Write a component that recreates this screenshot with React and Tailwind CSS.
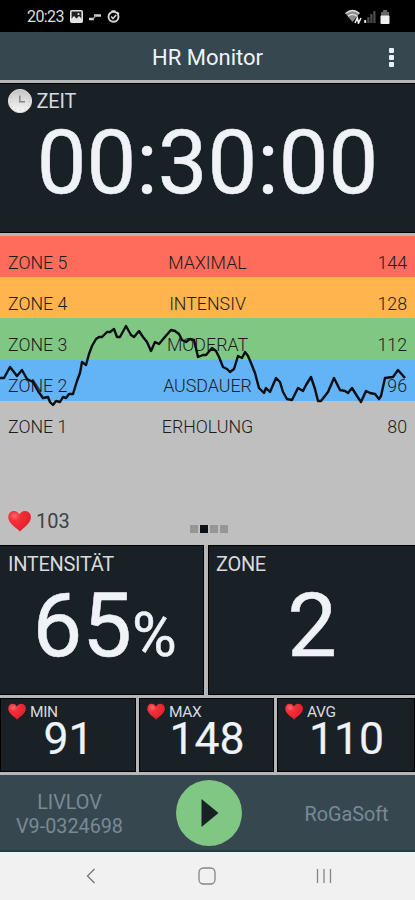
import React from "react";

const ZONES = [
  { name: "ZONE 5", label: "MAXIMAL", value: 144, bg: "bg-[#ff6c5c]" },
  { name: "ZONE 4", label: "INTENSIV", value: 128, bg: "bg-[#ffb44d]" },
  { name: "ZONE 3", label: "MODERAT", value: 112, bg: "bg-[#80c784]" },
  { name: "ZONE 2", label: "AUSDAUER", value: 96, bg: "bg-[#63b3f7]" },
  { name: "ZONE 1", label: "ERHOLUNG", value: 80, bg: "bg-[#bfbfbf]" },
];

// Heart-rate trace; the y axis starts at the top of the chart.
const TRACE =
  "0,142 4,142 10,131 17,140 22,134 27,143 33,146 38,155 43,162 48,161 50,166 53,169 56,165 60,166 63,161 66,162 69,158 73,158 77,145 80,137 82,126 86,129 89,118 92,110 96,103 99,101 102,101 107,96 110,96 114,93 117,101 120,101 126,90 131,99 134,101 139,95 143,101 147,106 151,115 155,106 159,108 164,102 171,94 175,95 179,98 182,104 186,106 190,103 194,104 198,121 203,119 206,119 212,112 216,115 219,121 223,131 227,133 230,136 234,133 238,120 242,122 245,116 248,120 251,127 255,137 259,152 264,157 266,152 270,156 276,142 280,146 283,156 287,163 292,164 298,152 303,155 306,149 311,141 315,153 318,165 321,165 328,156 334,142 340,154 345,155 348,157 352,152 357,160 361,166 366,155 370,157 375,158 379,163 381,160 385,142 393,141 398,134 405,142";

function Heart({ className }) {
  return (
    <svg viewBox="0 0 24 24" preserveAspectRatio="none" className={className}>
      <defs>
        <radialGradient id="heartFill" cx="28%" cy="25%" r="80%">
          <stop offset="0" stopColor="#ff6a6a" />
          <stop offset="0.3" stopColor="#f4303a" />
          <stop offset="1" stopColor="#e01f2a" />
        </radialGradient>
      </defs>
      <path
        fill="url(#heartFill)"
        d="M12.4 23.500C9.6 20 2.200 16.300.6 10.200-.6 5 2.200 1 6.200 1c2.700 0 4.700 1.700 5.600 4C13 2.400 15.300.800 18 1c4.200.300 6.800 4.300 5.600 9-1.500 5.800-8.400 10-11.200 13.500z"
      />
    </svg>
  );
}

function Clock() {
  return (
    <svg viewBox="0 0 26 26" className="size-[26px]">
      <defs>
        <linearGradient id="clockFace" x1="0" y1="0" x2="0" y2="1">
          <stop offset="0" stopColor="#c4c4c4" />
          <stop offset="1" stopColor="#f8f8f8" />
        </linearGradient>
      </defs>
      <circle cx="13" cy="13" r="11.600" fill="url(#clockFace)" stroke="#dcdcdc" strokeWidth="1" />
      <circle cx="13" cy="13" r="9.500" fill="none" stroke="#b4b4b4" strokeWidth="1" strokeDasharray="0.800 3.900" />
      <path d="M12.800 7.500v6.200h5.200" fill="none" stroke="#858585" strokeWidth="1.500" />
    </svg>
  );
}

function StatusBar() {
  return (
    <div className="flex h-8 items-center justify-between bg-black pt-[1px] pr-[25px] pl-[27px] text-[#dedede]">
      <div className="flex items-center">
        <span className="w-[38px] text-[16px] leading-[31px] tracking-[-0.6px]">20:23</span>
        <svg viewBox="0 0 13 13" className="ml-[5px] size-[13px]">
          <rect x="0.800" y="0.800" width="11.400" height="11.400" rx="1" fill="#222" stroke="#e2e2e2" strokeWidth="1.600" />
          <path d="M1 11V9l3-3 2.500 2.500L9 6l3 3v3H1z" fill="#e2e2e2" />
          <circle cx="8.500" cy="4" r="1.100" fill="#e2e2e2" />
        </svg>
        <svg viewBox="0 0 12 12" className="ml-[6px] size-3">
          <path d="M0 8h5M5 4.500h7" stroke="#d4d4d4" strokeWidth="2.400" />
          <path d="M4 8l3-3.500" stroke="#999" strokeWidth="1.200" />
        </svg>
        <svg viewBox="0 0 13 13" className="ml-[6px] size-[13px]">
          <circle cx="6.500" cy="6.800" r="5" fill="none" stroke="#d8d8d8" strokeWidth="1.900" />
          <path d="M4.200 6.600l1.800 2 3.200-3.600M4.500 1h4M10 2l2 2" fill="none" stroke="#d8d8d8" strokeWidth="1.500" />
        </svg>
      </div>
      <div className="flex items-center">
        <svg viewBox="0 0 17 15" className="h-[15px] w-[17px]">
          <path d="M0.500 4.500Q7.500-1.500 14.500 4.500L7.500 13z" fill="#8c8c8c" />
          <path d="M0.500 4.500Q7.500-1.500 14.500 4.500M3 7.200Q7.500 3.500 12 7.200" fill="none" stroke="#e0e0e0" strokeWidth="1.300" />
          <path d="M10 14l2.300-5 1.200 5 2.500-5" fill="none" stroke="#f2f2f2" strokeWidth="1.600" />
        </svg>
        <svg viewBox="0 0 12 13" className="ml-[2px] h-[13px] w-3">
          <path d="M1.200 13v-3" stroke="#dedede" strokeWidth="2" />
          <path d="M4.400 13V7M7.400 13V4M10.400 13V1" stroke="#4c4c4c" strokeWidth="2.200" />
        </svg>
        <svg viewBox="0 0 10 14" className="ml-[4px] h-[14px] w-[10px]">
          <path d="M3 0h4v2h2v4H1V2h2z" fill="#666" />
          <rect x="0.500" y="5.500" width="9" height="8.500" rx="1" fill="#f0f0f0" />
        </svg>
      </div>
    </div>
  );
}

function SmallStat({ label, value }) {
  return (
    <div className="h-[74px] border border-black bg-[#192026]">
      <div className="flex h-[22px] items-center gap-[4px] pt-[3px] pl-[7px]">
        <Heart className="h-[17px] w-[18px]" />
        <span className="text-[15.500px] leading-[18px] tracking-[-0.400px] text-[#d8dadd]">{label}</span>
      </div>
      <div className="pl-[1px] text-center text-[44.500px] leading-[36px] text-[#eff2f6] [-webkit-text-stroke:0.2px_#eff2f6]">
        {value}
      </div>
    </div>
  );
}

export default function App() {
  return (
    <div className="flex h-[900px] w-[415px] flex-col overflow-hidden bg-[#b5b6b8] font-['Roboto',sans-serif]">
      <StatusBar />

      <header className="grid h-12 grid-cols-[1fr_auto_1fr] items-center bg-[#37474f] pt-[3px]">
        <span />
        <h1 className="text-[22px] leading-[45px] text-[#eef4fb]">HR Monitor</h1>
        <div className="mr-[21px] flex flex-col gap-[2px] justify-self-end">
          <i className="size-[5px] rounded-[1px] bg-[#e6f2fa]" />
          <i className="size-[5px] rounded-[1px] bg-[#e6f2fa]" />
          <i className="size-[5px] rounded-[1px] bg-[#e6f2fa]" />
        </div>
      </header>

      <section className="mt-[3px] h-[150px] border-y border-black bg-[#192026]">
        <div className="flex h-[34px] items-center gap-[4px] pl-[6.500px]">
          <Clock />
          <span className="text-[20px] leading-[34px] tracking-[-0.200px] text-[#d8dadd]">ZEIT</span>
        </div>
        <div className="pt-[1px] text-center text-[88.500px] leading-[88px] text-[#eff2f6] [-webkit-text-stroke:0.5px_#eff2f6]">
          00:30:00
        </div>
      </section>

      <section className="relative mt-[3px] flex h-[309px] flex-col bg-[#bfbfbf]">
        {ZONES.map((z) => (
          <div
            key={z.name}
            className={`grid h-[41.200px] shrink-0 grid-cols-3 items-end px-[8px] pb-[3.500px] text-[17.800px] leading-[22px] font-light text-[#1c1c1c] ${z.bg}`}
          >
            <span>{z.name}</span>
            <span className="text-center">{z.label}</span>
            <span className="text-right">{z.value}</span>
          </div>
        ))}
        <div className="mt-auto flex items-center pb-[12px] pl-[8px]">
          <Heart className="h-[22px] w-[23px]" />
          <span className="ml-[5px] text-[20px] leading-6 text-[#414141]">103</span>
          <div className="mt-[16px] ml-[120px] flex gap-[2px]">
            <i className="size-[8px] bg-[#969696]" />
            <i className="size-[8px] bg-[#0c1218]" />
            <i className="size-[8px] bg-[#969696]" />
            <i className="size-[8px] bg-[#969696]" />
          </div>
        </div>
        <svg viewBox="0 0 415 309" className="absolute inset-0 h-full w-full">
          <polyline points={TRACE} fill="none" stroke="#0b0e12" strokeWidth="2.400" strokeLinejoin="round" />
        </svg>
      </section>

      <section className="flex h-[150px] gap-[4px]">
        <div className="w-[204px] border border-l-0 border-black bg-[#192026]">
          <div className="pl-[8px] text-[20px] leading-9 tracking-[-0.3px] text-[#d8dadd]">INTENSITÄT</div>
          <div className="pl-[32.500px] text-[88.500px] leading-[88px] text-[#eff2f6] [-webkit-text-stroke:0.5px_#eff2f6]">
            65<span className="text-[61px]">%</span>
          </div>
        </div>
        <div className="flex-1 border border-r-0 border-black bg-[#192026]">
          <div className="pl-[7px] text-[20px] leading-9 tracking-[-0.3px] text-[#d8dadd]">ZONE</div>
          <div className="text-center text-[88.500px] leading-[88px] text-[#eff2f6] [-webkit-text-stroke:0.5px_#eff2f6]">2</div>
        </div>
      </section>

      <section className="mt-[3px] grid grid-cols-[136px_135px_138px] gap-[3px]">
        <SmallStat label="MIN" value="91" />
        <SmallStat label="MAX" value="148" />
        <SmallStat label="AVG" value="110" />
      </section>

      <footer className="mt-[3px] grid h-[77px] grid-cols-[139px_139px_137px] items-center border-b-2 border-[#1d3d4b] bg-[#37474f] pt-[1px] text-center text-[19.800px] leading-[24px] text-[#788a96]">
        <div className="pt-[3px]">
          LIVLOV
          <br />
          V9-0324698
        </div>
        <div className="flex size-[66px] items-center justify-center justify-self-center rounded-full bg-[#80c784]">
          <svg viewBox="0 0 18 30" className="ml-[3px] h-[30px] w-[18px]">
            <path d="M0.500 1v28L17.500 15z" fill="#192026" />
          </svg>
        </div>
        <div className="pt-[3px]">RoGaSoft</div>
      </footer>

      <nav className="flex flex-1 items-center bg-[#f1f1f1]">
        <svg viewBox="0 0 10 16" className="ml-[86px] h-4 w-[10px]">
          <path d="M8.500 1L1.500 8l7 7" fill="none" stroke="#777" strokeWidth="1.300" />
        </svg>
        <svg viewBox="0 0 18 18" className="ml-[102px] size-[18px]">
          <rect x="1" y="1" width="16" height="16" rx="4.500" fill="none" stroke="#858585" strokeWidth="1.300" />
        </svg>
        <svg viewBox="0 0 16 16" className="ml-[100px] size-4">
          <path d="M1.500 1v14M8 1v14M14.500 1v14" stroke="#858585" strokeWidth="1.300" />
        </svg>
      </nav>
    </div>
  );
}
